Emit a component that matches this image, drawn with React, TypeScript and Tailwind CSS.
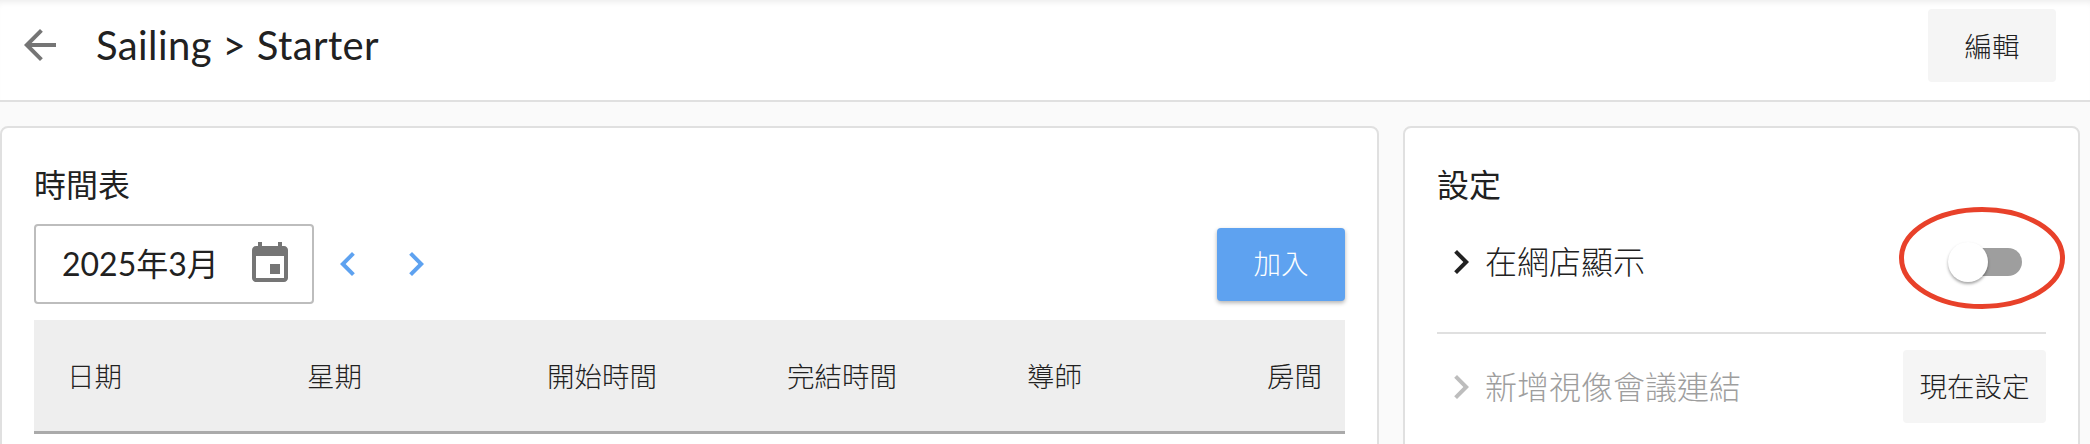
const fontStack = "font-['Lato','Noto_Sans_CJK_TC',sans-serif]";

const columns = ["日期", "星期", "開始時間", "完結時間", "導師"];

function MuiIcon({ d, className }: { d: string; className: string }) {
  return (
    <svg viewBox="0 0 24 24" className={`w-12 h-12 shrink-0 fill-current ${className}`}>
      <path d={d} />
    </svg>
  );
}

const ARROW_BACK = "M20 11H7.83l5.59-5.59L12 4l-8 8 8 8 1.41-1.41L7.83 13H20v-2z";
const EVENT =
  "M17 12h-5v5h5v-5zM16 1v2H8V1H6v2H5c-1.11 0-1.99.9-1.99 2L3 19c0 1.1.89 2 2 2h14c1.1 0 2-.9 2-2V5c0-1.1-.9-2-2-2h-1V1h-2zm3 18H5V8h14v11z";
const CHEVRON_LEFT = "M15.41 7.41L14 6l-6 6 6 6 1.41-1.41L10.83 12z";
const CHEVRON_RIGHT = "M10 6L8.59 7.41 13.17 12l-4.58 4.59L10 18l6-6z";

export default function App() {
  return (
    <div className={`${fontStack} relative h-[444px] w-[2090px] overflow-hidden bg-[#fafafa] text-[#212121]`}>
      {/* header */}
      <header className="flex h-[102px] items-center border-b-2 border-[#e0e0e0] bg-white pl-4 pr-[34px] pb-[11px] shadow-[inset_0_6px_6px_-4px_rgba(0,0,0,0.08)]">
        <MuiIcon d={ARROW_BACK} className="text-[#757575]" />
        <h1 className="ml-[32px] text-[40px] leading-none tracking-[0.4px]">Sailing &gt; Starter</h1>
        <button className="ml-auto mt-[2px] h-[73px] w-[128px] rounded bg-[#f5f5f5] pt-[2px] text-[27.5px] font-light text-[#212121]">編輯</button>
      </header>

      <main className="flex gap-[24px] pt-[24px] pr-[10px]">
        {/* schedule card */}
        <section className="h-[400px] w-[1379px] rounded-lg border-2 border-[#e0e0e0] bg-white px-[32px] pt-[37px]">
          <h2 className="h-[40px] text-[32px] leading-[40px]">時間表</h2>
          <div className="mt-[19px] flex h-[80px] items-center">
            <div className="flex h-[80px] w-[280px] items-center rounded border-2 border-[#bdbdbd] pl-[26px] pr-[18px]">
              <span className="text-[32px]">2025年3月</span>
              <MuiIcon d={EVENT} className="ml-auto text-[#757575]" />
            </div>
            <MuiIcon d={CHEVRON_LEFT} className="ml-[10px] text-[#5ea2f0]" />
            <MuiIcon d={CHEVRON_RIGHT} className="ml-[20px] text-[#5ea2f0]" />
            <button className="ml-auto h-[73px] w-[128px] rounded bg-[#5ea2f0] text-[27.5px] font-light text-white shadow-[0_2px_4px_rgba(0,0,0,0.3)]">
              加入
            </button>
          </div>
          <div className="mt-[16px] grid h-[114px] grid-cols-[repeat(5,240px)_1fr] items-center whitespace-nowrap border-b-[3px] border-[#aaaaaa] bg-[#eeeeee] pl-[33px] pr-[24px] pt-[3px] text-[27.5px] font-light text-[#212121]">
            {columns.map((label) => (
              <div key={label}>{label}</div>
            ))}
            <div className="text-right">房間</div>
          </div>
        </section>

        {/* settings card */}
        <section className="relative h-[400px] w-[677px] rounded-lg border-2 border-[#e0e0e0] bg-white px-[32px] pt-[37px]">
          <h2 className="h-[40px] text-[32px] leading-[40px]">設定</h2>
          <div className="mt-[19px] mb-[32px] flex h-[76px] items-center">
            <MuiIcon d={CHEVRON_RIGHT} className="text-[#212121]" />
            <span className="text-[32px] font-light">在網店顯示</span>
            <div className="relative ml-auto mr-[24px] h-[28px] w-[68px] rounded-full bg-[#9e9e9e]">
              <div className="absolute -top-[6px] -left-[6px] h-[40px] w-[40px] rounded-full bg-white shadow-[0_2px_3px_rgba(0,0,0,0.35)]" />
            </div>
          </div>
          <div className="h-[2px] bg-[#e0e0e0]" />
          <div className="mt-[16px] flex items-center">
            <MuiIcon d={CHEVRON_RIGHT} className="text-[#bdbdbd]" />
            <span className="text-[32px] font-light text-[#9e9e9e]">新增視像會議連結</span>
            <button className="ml-auto h-[73px] w-[143px] rounded bg-[#f5f5f5] text-[27.5px] font-light text-[#212121]">現在設定</button>
          </div>

          {/* red annotation around the toggle */}
          <svg viewBox="0 0 166 102" className="absolute left-[494px] top-[79px] h-[102px] w-[166px] fill-none stroke-[#e8412a]">
            <ellipse cx="83" cy="51" rx="80.5" ry="48.5" strokeWidth="5" />
          </svg>
        </section>
      </main>
    </div>
  );
}
